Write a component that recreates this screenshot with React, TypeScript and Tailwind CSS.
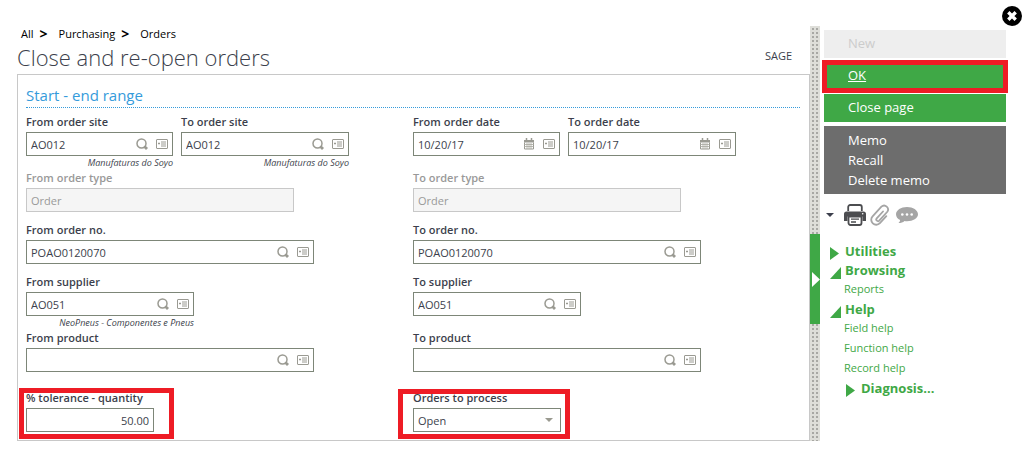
import { useId, useState } from 'react'
import type { ReactNode } from 'react'

function SearchIcon() {
  return (
    <svg width="12" height="12" viewBox="0 0 12 12" fill="none" stroke="#9a9a92">
      <circle cx="5.5" cy="5.5" r="4.5" strokeWidth="1.5" />
      <path d="M8.2 8.2l2.8 2.8" strokeWidth="2.8" />
    </svg>
  )
}

function CalendarIcon() {
  return (
    <svg width="12" height="12" viewBox="0 0 12 12">
      <path d="M1 2h10v2.500H1z" fill="#9a9a92" />
      <path d="M3.500 0v3M8.500 0v3" stroke="#9a9a92" strokeWidth="1.5" />
      <path d="M1.500 4.500v6.500h9V4.500" fill="none" stroke="#9a9a92" />
      <path d="M1 6.500h10M1 8.500h10M4 5v6M6 5v6M8 5v6" stroke="#a8a8a0" strokeWidth="0.8" />
    </svg>
  )
}

function ListIcon() {
  return (
    <svg width="12" height="12" viewBox="0 0 12 12" fill="none" stroke="#9a9a92">
      <rect x="0.5" y="1.5" width="11" height="9" rx="0.5" />
      <path d="M5 4h5M5 6h5M5 8h5" />
      <path d="M2 5.500h2" strokeWidth="1.500" />
    </svg>
  )
}

function CloseIcon() {
  return (
    <svg width="20" height="20" viewBox="0 0 20 20">
      <circle cx="10" cy="10" r="10" fill="#000" />
      <path d="M6.3 6.3l7.4 7.4M13.7 6.3l-7.4 7.4" stroke="#fff" strokeWidth="3.4" />
    </svg>
  )
}

function PrinterIcon() {
  return (
    <svg width="22" height="22" viewBox="0 0 22 22">
      <path d="M4.2 7V3a2 2 0 0 1 2-2h9.6a2 2 0 0 1 2 2v4" fill="none" stroke="#4c4d50" strokeWidth="1.8" />
      <path d="M2.5 7.500h17A2.500 2.500 0 0 1 22 10v7h-3.500v-4.500h-15V17H0v-7a2.500 2.500 0 0 1 2.500-2.500z" fill="#4c4d50" />
      <path d="M4.500 12.500h13V19a2 2 0 0 1-2 2h-9a2 2 0 0 1-2-2z" fill="#fff" stroke="#4c4d50" strokeWidth="1.8" />
      <path d="M7 15.200h8M7 18h5" stroke="#4c4d50" strokeWidth="1.300" />
      <circle cx="18.700" cy="9.700" r="0.800" fill="#fff" />
    </svg>
  )
}

function ClipIcon() {
  return (
    <svg width="20" height="22" viewBox="0 0 20 22" fill="none" stroke="#a5a5a5" strokeWidth="1.8" strokeLinecap="round">
      <path d="M13 7.500L6.700 14.300a1.700 1.700 0 0 0 2.500 2.300l7.900-8.600a3.900 3.900 0 0 0-5.700-5.300L2.600 12.300a5 5 0 0 0 7.300 6.900l6.400-7" />
    </svg>
  )
}

function ChatIcon() {
  return (
    <svg width="22" height="18" viewBox="0 0 22 18">
      <path d="M11 1c6 0 11 3.200 11 7.200s-5 7-11 7c-.9 0-1.700 0-2.500-.2C7 16.500 5 17 2.500 17c1-.8 1.500-1.800 1.600-3C1.600 12.800 0 10.700 0 8.200 0 4.200 5 1 11 1z" fill="#a5a5a5" />
      <circle cx="6.300" cy="8.500" r="1.300" fill="#fff" />
      <circle cx="11" cy="8.500" r="1.300" fill="#fff" />
      <circle cx="15.700" cy="8.500" r="1.300" fill="#fff" />
    </svg>
  )
}

function Arrow({ open = false }: { open?: boolean }) {
  return (
    <svg width="11" height="16" viewBox="0 0 11 16" fill="#3fa846" className="shrink-0">
      {open ? <path d="M11 4v12H0z" /> : <path d="M0 3l9 6.500L0 16z" />}
    </svg>
  )
}

// red frame drawn around the parts to look at
function Highlight({ className }: { className: string }) {
  return <span className={`pointer-events-none absolute border-5 border-[#ee1c25] ${className}`} />
}

interface FieldProps {
  label: string
  width: string
  value?: string
  icon?: 'search' | 'calendar'
  hint?: string
  disabled?: boolean
  alignRight?: boolean
  children?: ReactNode
}

function Field({ label, width, value = '', icon, hint, disabled = false, alignRight = false, children }: FieldProps) {
  const id = useId()
  const [text, setText] = useState(value)

  return (
    <div className={`relative ${width}`}>
      <label htmlFor={id} className={`block h-[18px] text-[11px] leading-4 font-semibold ${disabled ? 'text-[#999]' : 'text-[#3c3f4c]'}`}>
        {label}
      </label>
      <div className={`flex h-6 items-center border ${icon ? 'pr-1' : ''} ${disabled ? 'border-[#c8c8c8] bg-[#f5f5f5]' : 'border-[#7d8678] bg-white'}`}>
        <input
          id={id}
          type="text"
          value={text}
          disabled={disabled}
          onChange={(e) => setText(e.target.value)}
          className={`min-w-0 flex-1 bg-transparent px-1 pt-0.5 text-[11px] leading-4 outline-none ${disabled ? 'text-[#999]' : 'text-[#3c3f4c]'} ${alignRight ? 'text-right' : ''}`}
        />
        {icon && (
          <div className="flex gap-2">
            <button type="button" aria-label={icon === 'search' ? 'Search' : 'Pick a date'}>
              {icon === 'search' ? <SearchIcon /> : <CalendarIcon />}
            </button>
            <button type="button" aria-label="Actions">
              <ListIcon />
            </button>
          </div>
        )}
      </div>
      {hint && <p className="text-right text-[9px] leading-[14px] whitespace-nowrap text-[#3c3f4c] italic">{hint}</p>}
      {children}
    </div>
  )
}

function OrdersSelect() {
  return (
    <div className="relative w-[148px]">
      <label htmlFor="orders" className="block h-[18px] text-[11px] leading-4 font-semibold text-[#3c3f4c]">
        Orders to process
      </label>
      <div className="relative">
        <select
          id="orders"
          defaultValue="Open"
          className="block h-6 w-full appearance-none border border-[#7d8678] bg-white px-1 pt-0.5 text-[11px] leading-4 text-[#3c3f4c]"
        >
          <option>Open</option>
        </select>
        <svg width="8" height="4" viewBox="0 0 8 4" className="pointer-events-none absolute top-2.5 right-2">
          <path d="M0 0h8L4 4z" fill="#9a9a90" />
        </svg>
      </div>
      <Highlight className="-top-px -right-[9px] -bottom-[7px] -left-[15px]" />
    </div>
  )
}

function Splitter() {
  return (
    <div className="w-2.5 shrink-0 bg-[#a8a8a4] bg-[linear-gradient(to_right,#deded9_50%,transparent_50%),linear-gradient(to_bottom,#deded9_50%,transparent_50%)] bg-size-[4px_4px]">
      <button type="button" aria-label="Collapse menu" className="mt-52 flex h-[90px] w-full items-center bg-[#3fa846] pl-0.5">
        <svg width="8" height="15" viewBox="0 0 8 15">
          <path d="M0 0l8 7.500L0 15z" fill="#fff" />
        </svg>
      </button>
    </div>
  )
}

function Sidebar() {
  return (
    <aside className="mr-[22px] ml-1 w-[182px] shrink-0 pt-1">
      <div className="flex flex-col gap-1 text-[13px] text-white">
        <button type="button" disabled className="h-7 bg-[#eee] pl-6 text-left text-[#ccc]">New</button>
        <div className="relative">
          <button type="button" className="block h-7 w-full bg-[#3fa846] pl-6 text-left underline">OK</button>
          <Highlight className="-inset-x-0.5 -top-0.5 -bottom-[3px]" />
        </div>
        <button type="button" className="h-7 bg-[#3fa846] pl-6 text-left">Close page</button>
        <div className="flex h-[68px] flex-col items-start bg-[#6d6d6d] pt-1 pl-6 leading-5">
          <button type="button">Memo</button>
          <button type="button">Recall</button>
          <button type="button">Delete memo</button>
        </div>
      </div>

      <div className="mt-2.5 flex h-[22px] items-center">
        <button type="button" aria-label="Print options" className="mr-2.5 ml-0.5">
          <svg width="8" height="4" viewBox="0 0 8 4" fill="#3c3f4c"><path d="M0 0h8L4 4z" /></svg>
        </button>
        <button type="button" aria-label="Print"><PrinterIcon /></button>
        <button type="button" aria-label="Attachments" className="ml-1"><ClipIcon /></button>
        <button type="button" aria-label="Comments" className="ml-1.5"><ChatIcon /></button>
      </div>

      <nav className="mt-4 pl-1.5 text-[#3fa846]">
        <button type="button" className="flex h-[19px] items-center gap-1 text-[13px] font-bold"><Arrow />Utilities</button>
        <button type="button" className="flex h-[19px] items-center gap-1 text-[13px] font-bold"><Arrow open />Browsing</button>
        <a href="#reports" className="block h-5 pl-3.5 text-[11px] leading-[18px]">Reports</a>
        <button type="button" className="flex h-[19px] items-center gap-1 text-[13px] font-bold"><Arrow open />Help</button>
        <a href="#field" className="block h-5 pl-3.5 text-[11px] leading-[18px]">Field help</a>
        <a href="#function" className="block h-5 pl-3.5 text-[11px] leading-[18px]">Function help</a>
        <a href="#record" className="block h-5 pl-3.5 text-[11px] leading-[18px]">Record help</a>
        <button type="button" className="ml-4 flex h-[19px] items-center gap-1 text-[13px] font-bold"><Arrow />Diagnosis...</button>
      </nav>
    </aside>
  )
}

export default function App() {
  return (
    <div className="bg-white font-['Open_Sans','Noto_Sans',sans-serif] text-[#3c3f4c]">
      <div className="flex justify-end pt-1.5 pr-1.5">
        <button type="button" aria-label="Close"><CloseIcon /></button>
      </div>

      <div className="flex">
        <main className="flex min-w-0 flex-1 flex-col pl-[17px]">
          <nav className="flex h-4 items-center pl-1 text-[11px] text-black">
            <a href="#all">All</a>
            <span className="w-[25px] pl-1.5 text-sm leading-4 font-bold">&gt;</span>
            <a href="#purchasing">Purchasing</a>
            <span className="w-[25px] pl-1.5 text-sm leading-4 font-bold">&gt;</span>
            <a href="#orders">Orders</a>
          </nav>
          <div className="flex h-8 items-start justify-between pr-[18px]">
            <h1 className="text-[22px] leading-[30px] font-light">Close and re-open orders</h1>
            <span className="text-[11px] leading-7">SAGE</span>
          </div>

          <section className="border border-[#c8c8c8] pr-[9px] pb-2 pl-2">
            <h2 className="mb-1.5 h-[33px] border-b border-dotted border-[#359bdb] pt-2 text-[15px] leading-6 text-[#359bdb]">
              Start - end range
            </h2>
            <div className="grid grid-cols-2 grid-rows-[56px_52px_52px_56px_60px_42px]">
              <div className="flex gap-2">
                <Field label="From order site" width="w-[147px]" value="AO012" icon="search" hint="Manufaturas do Soyo" />
                <Field label="To order site" width="w-[168px]" value="AO012" icon="search" hint="Manufaturas do Soyo" />
              </div>
              <div className="flex gap-2">
                <Field label="From order date" width="w-[147px]" value="10/20/17" icon="calendar" />
                <Field label="To order date" width="w-[168px]" value="10/20/17" icon="calendar" />
              </div>
              <Field label="From order type" width="w-[268px]" value="Order" disabled />
              <Field label="To order type" width="w-[268px]" value="Order" disabled />
              <Field label="From order no." width="w-[288px]" value="POAO0120070" icon="search" />
              <Field label="To order no." width="w-[288px]" value="POAO0120070" icon="search" />
              <Field label="From supplier" width="w-[168px]" value="AO051" icon="search" hint="NeoPneus - Componentes e Pneus" />
              <Field label="To supplier" width="w-[168px]" value="AO051" icon="search" />
              <Field label="From product" width="w-[288px]" icon="search" />
              <Field label="To product" width="w-[288px]" icon="search" />
              <Field label="% tolerance - quantity" width="w-[128px]" value="50.00" alignRight>
                <Highlight className="-top-0.5 -right-5 -bottom-[7px] -left-[7px]" />
              </Field>
              <OrdersSelect />
            </div>
          </section>
        </main>
        <Splitter />
        <Sidebar />
      </div>
    </div>
  )
}
